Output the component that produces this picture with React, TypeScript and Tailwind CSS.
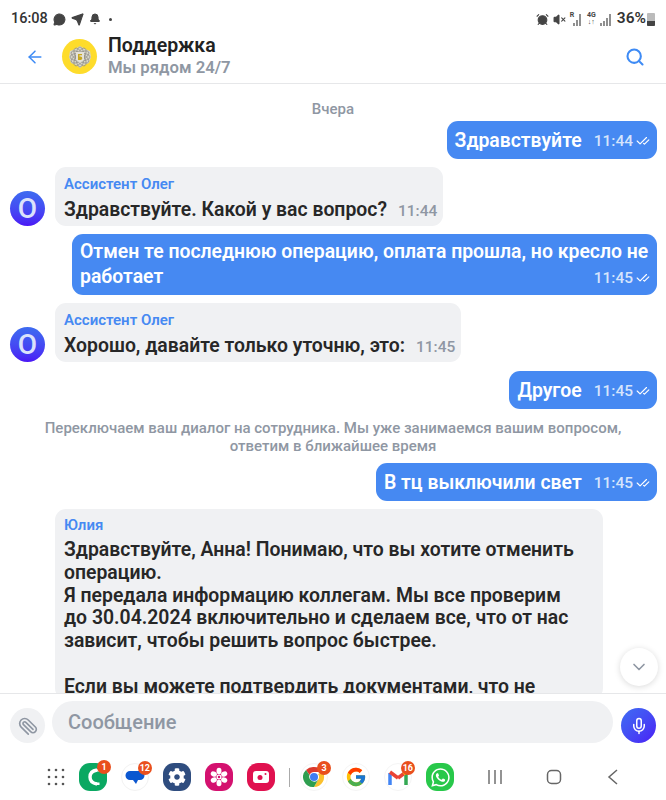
import React from 'react';
import { ArrowLeft, Search, ChevronDown, Paperclip, Mic, Bell, Send, MessageCircle, AlarmClock, VolumeX, CheckCheck } from 'lucide-react';
import { FaCog, FaWhatsapp } from 'react-icons/fa';
import { FcGoogle } from 'react-icons/fc';

const Bars = ({ className }: { className?: string }) => (
  <svg width="11" height="13" viewBox="0 0 11 13" className={`text-[#555] ${className ?? ''}`}>
    <path d="M1 13v-3M4 13V8M7 13V5M10 13V1" stroke="currentColor" strokeWidth="1.300" fill="none" />
  </svg>
);

const StatusBar = () => (
  <div className="flex h-[30px] shrink-0 items-center justify-between pl-[11px] pr-[11px] pt-[8px] text-[#333]">
    <div className="flex items-center gap-[5px]">
      <span className="text-[14.500px] font-medium">16:08</span>
      <MessageCircle size={13} fill="#444" stroke="#444" />
      <Send size={13} fill="#444" stroke="#444" />
      <Bell size={12} fill="#444" stroke="#444" />
      <span className="ml-[3px] h-[3px] w-[3px] rounded-full bg-[#444]" />
    </div>
    <div className="flex items-center">
      <AlarmClock size={13} fill="#444" stroke="#444" />
      <VolumeX size={13} fill="#444" stroke="#444" className="ml-[4px]" />
      <span className="relative ml-[4px] flex h-[14px] w-[11px] items-end justify-end">
        <span className="absolute left-0 top-[-1px] text-[7px] font-bold leading-[8px] text-[#444]">R</span>
        <svg width="8" height="12" viewBox="0 0 8 12" className="text-[#555]"><path d="M1 12V9M4 12V6M7 12V0" stroke="currentColor" strokeWidth="1.300" fill="none" /></svg>
      </span>
      <span className="ml-[6px] flex h-[14px] w-[9px] flex-col items-center text-[7px] font-bold leading-[7px] text-[#444]">
        <span>4G</span>
        <span>↓↑</span>
      </span>
      <Bars className="ml-[4px]" />
      <span className="ml-[6px] text-[15.500px] font-semibold leading-none">36%</span>
      <span className="relative ml-[1px] h-[13px] w-[8px] rounded-[1px] bg-[#bbb]">
        <span className="absolute bottom-0 left-0 right-0 h-[5px] rounded-b-[1px] bg-[#444]" />
      </span>
    </div>
  </div>
);

const Logo = () => (
  <div className="flex h-[35px] w-[35px] shrink-0 items-center justify-center rounded-full bg-[#fedc2b]">
    <svg width="24" height="24" viewBox="0 0 24 24">
      <path d="M12 1l5 3 5 2 1 6-2 6-5 2-4 3-4-3-5-2-2-6 1-6 5-2z" fill="#d6d4c8" />
      {[0, 30, 60, 90, 120, 150].map((a) => (
        <ellipse key={a} cx="12" cy="12" rx="10" ry="4" fill="none" stroke="#8f8e86" strokeWidth="0.700" transform={`rotate(${a} 12 12)`} />
      ))}
      <path d="M8 7h8v8l-4 3-4-3z" fill="#e4e2d8" />
      <path d="M10 9h4v1.200h-2.500v1.300h1a1.800 1.800 0 010 3.600H10z" fill="#c9a91c" />
    </svg>
  </div>
);

const Header = () => (
  <div className="flex h-[54px] shrink-0 items-center border-b border-[#e6e7e9] pl-[25px] pr-[21px]">
    <ArrowLeft size={20} strokeWidth={1.800} className="text-[#3e8bf5]" />
    <div className="ml-[17px]"><Logo /></div>
    <div className="ml-[11px] flex flex-1 flex-col">
      <span className="text-[19.500px] font-semibold leading-[22px] text-[#222]">Поддержка</span>
      <span className="text-[16.700px] font-semibold leading-[22px] text-[#8f97a3]">Мы рядом 24/7</span>
    </div>
    <Search size={20} strokeWidth={2.500} className="text-[#3e8bf5]" />
  </div>
);

const Mine = ({ text, time }: { text: string; time: string }) => (
  <div className="flex justify-end pr-[9px]">
    <div className="flex h-[38px] items-center rounded-[11px] bg-[#4689f2] pl-[8px] pr-[7px] text-white">
      <span className="mt-[1px] text-[19.400px] font-semibold">{text}</span>
      <span className="ml-[12px] mt-[4px] text-[15.500px] font-medium text-[#d5e4fc]">{time}</span>
      <CheckCheck size={14} className="ml-[3px] mt-[2px]" />
    </div>
  </div>
);

const MineWide = ({ first, second, time }: { first: string; second: string; time: string }) => (
  <div className="flex justify-end pr-[9px]">
    <div className="flex h-[61px] w-[585px] flex-col rounded-[11px] bg-[#4689f2] pl-[8px] pr-[7px] pt-[6px] text-white">
      <div className="whitespace-nowrap text-[19.400px] font-semibold leading-[24px]">{first}</div>
      <div className="flex items-center justify-between leading-[24px]">
        <span className="text-[19.400px] font-semibold">{second}</span>
        <span className="mt-[2px] flex items-center text-[15.500px] font-medium text-[#d5e4fc]">
          {time}
          <CheckCheck size={14} className="ml-[3px] text-white" />
        </span>
      </div>
    </div>
  </div>
);

const Assistant = ({ text, time }: { text: string; time: string }) => (
  <div className="flex items-end pl-[10px]">
    <div className="flex h-[35px] w-[35px] items-center justify-center rounded-full bg-gradient-to-b from-[#3d6bf0] to-[#4a14f5] text-[28px] font-medium leading-none text-[#dbe2fb]">
      O
    </div>
    <div className="ml-[10px] flex h-[59px] flex-col rounded-[11px] bg-[#f0f1f3] pl-[9px] pr-[6px] pt-[8px]">
      <span className="text-[15px] font-semibold leading-[18px] text-[#4689f2]">Ассистент Олег</span>
      <div className="mt-[3px] flex items-center leading-[26px]">
        <span className="text-[19.400px] font-semibold text-[#272727]">{text}</span>
        <span className="ml-[11px] mt-[2px] text-[15.500px] font-medium text-[#8f97a3]">{time}</span>
      </div>
    </div>
  </div>
);

const Chat = () => (
  <div className="relative min-h-0 flex-1 overflow-hidden">
    <div className="flex flex-col gap-[8px]">
      <div className="-mb-[3px] pt-[18px] text-center text-[15px] font-medium leading-[14px] text-[#8f97a3]">Вчера</div>
      <Mine text="Здравствуйте" time="11:44" />
      <Assistant text="Здравствуйте. Какой у вас вопрос?" time="11:44" />
      <MineWide first="Отмен те последнюю операцию, оплата прошла, но кресло не" second="работает" time="11:45" />
      <Assistant text="Хорошо, давайте только уточню, это:" time="11:45" />
      <div className="mt-[1px]">
        <Mine text="Другое" time="11:45" />
      </div>
      <div className="px-[40px] pt-[2px] text-center text-[15px] font-medium leading-[18px] text-[#8f97a3]">
        Переключаем ваш диалог на сотрудника. Мы уже занимаемся вашим вопросом, ответим в ближайшее время
      </div>
      <Mine text="В тц выключили свет" time="11:45" />
      <div className="ml-[55px] w-[548px] rounded-[11px] bg-[#f0f1f3] pl-[9px] pr-[20px] pt-[7px]">
        <div className="text-[15px] font-semibold leading-[18px] text-[#4689f2]">Юлия</div>
        <div className="mt-[5px] whitespace-pre-line text-[19.400px] font-semibold leading-[22.800px] text-[#272727]">
          {'Здравствуйте, Анна! Понимаю, что вы хотите отменить операцию.\nЯ передала информацию коллегам. Мы все проверим до 30.04.2024 включительно и сделаем все, что от нас зависит, чтобы решить вопрос быстрее.\n\nЕсли вы можете подтвердить документами, что не'}
        </div>
      </div>
    </div>
    <div className="absolute bottom-[7px] right-[8px] flex h-[38px] w-[38px] items-center justify-center rounded-full bg-white shadow-[0_1px_6px_rgba(0,0,0,0.15)]">
      <ChevronDown size={20} className="text-[#8f97a3]" />
    </div>
  </div>
);

const InputBar = () => (
  <div className="flex h-[57px] shrink-0 items-end border-t border-[#e6e7e9] pb-[7px] pl-[10px] pr-[10px]">
    <div className="flex h-[35px] w-[35px] items-center justify-center rounded-full bg-[#f0f1f3]">
      <Paperclip size={20} className="rotate-90 text-[#8f97a3]" />
    </div>
    <div className="ml-[7px] flex h-[42px] w-[561px] items-center rounded-full bg-[#f0f1f3] pl-[16px] text-[20px] font-medium text-[#8f97a3]">
      Сообщение
    </div>
    <div className="ml-[8px] flex h-[35px] w-[35px] items-center justify-center rounded-full bg-gradient-to-br from-[#3f6bf3] to-[#4a14f5]">
      <Mic size={18} className="text-white" />
    </div>
  </div>
);

const Badge = ({ n }: { n: string }) => (
  <span className="absolute right-[-4px] top-[-3px] flex h-[14px] min-w-[14px] items-center justify-center rounded-full bg-[#e94f1d] px-[2px] text-[9px] font-bold leading-none text-white">
    {n}
  </span>
);

const DockIcon = ({ badge, className, children }: { badge?: string; className?: string; children?: React.ReactNode }) => (
  <div className={`relative flex h-[28px] w-[28px] shrink-0 items-center justify-center rounded-[11px] ${className ?? ''}`}>
    {children}
    {badge && <Badge n={badge} />}
  </div>
);

const Dock = () => (
  <div className="flex h-[50px] shrink-0 items-center pl-[47px] pt-[4px]">
    <svg width="18" height="18" viewBox="0 0 18 18" fill="#555" className="mr-[14px]">
      {[2, 9, 16].map((y) => [2, 9, 16].map((x) => <circle key={`${x}-${y}`} cx={x} cy={y} r="1.300" />))}
    </svg>
    <div className="flex items-center gap-[14px]">
      <DockIcon badge="1" className="bg-[#0aa862]">
        <svg width="20" height="22" viewBox="0 0 20 22" fill="none" stroke="#fff" strokeWidth="3.400"><path d="M14 4C8 5 7 8 7 11s1 6 7 7" /><path d="M14 3v2.500M14 16.500V19" strokeWidth="5" /></svg>
      </DockIcon>
      <DockIcon badge="12" className="rounded-full border border-[#f2f2f2]">
        <svg width="22" height="20" viewBox="0 0 22 20"><path d="M6 4h10a4.500 4.500 0 010 9h-2l-2 4-3-4H6a4.500 4.500 0 010-9z" fill="#0b57d0" /></svg>
      </DockIcon>
      <DockIcon className="bg-[#2f4d7f]">
        <FaCog size={18} color="#fff" />
      </DockIcon>
      <DockIcon className="bg-[#d4116f]">
        <svg width="20" height="20" viewBox="0 0 20 20" fill="#fff">
          {[0, 60, 120, 180, 240, 300].map((a) => <ellipse key={a} cx="10" cy="4" rx="2.500" ry="3.200" transform={`rotate(${a} 10 10)`} />)}
          <circle cx="10" cy="10" r="2.500" />
          <circle cx="10" cy="10" r="1.200" fill="#d4116f" />
        </svg>
      </DockIcon>
      <DockIcon className="bg-[#e0114f]">
        <svg width="20" height="18" viewBox="0 0 20 18"><rect x="2" y="3" width="16" height="12" rx="3" fill="#fff" /><circle cx="9" cy="9.500" r="2.500" fill="#e0114f" /><circle cx="14.500" cy="6" r="1" fill="#e0114f" /></svg>
      </DockIcon>
      <div className="h-[19px] w-px bg-[#aaa]" />
      <DockIcon badge="3" className="-ml-[4px] rounded-full border border-[#f5f5f5]">
        <svg width="22" height="22" viewBox="0 0 22 22">
          <path d="M11 1a10 10 0 018.700 5H11a5 5 0 00-4.500 3L3 4a10 10 0 018-3z" fill="#db3a2e" />
          <path d="M19.700 6A10 10 0 0111 21l4.300-7.500A5 5 0 0015 8z" fill="#fbc02d" />
          <path d="M3 4a10 10 0 008 17l4.300-7.500a5 5 0 01-8.800-4.500z" fill="#2e9e4f" />
          <circle cx="11" cy="11" r="4" fill="#3e7cf2" />
        </svg>
      </DockIcon>
      <DockIcon className="rounded-full border border-[#f5f5f5]">
        <FcGoogle size={22} />
      </DockIcon>
      <DockIcon badge="16" className="rounded-full border border-[#f5f5f5]">
        <svg width="20" height="16" viewBox="0 0 20 16" fill="none" strokeWidth="3.500">
          <path d="M2 16V4" stroke="#4285f4" />
          <path d="M18 16V4" stroke="#34a853" />
          <path d="M2 3l8 6" stroke="#ea4335" />
          <path d="M10 9l8-6" stroke="#ea4335" />
          <path d="M15.500 5L18 3" stroke="#fbbc05" />
        </svg>
      </DockIcon>
      <DockIcon className="bg-[#28c84a]">
        <FaWhatsapp size={21} color="#fff" />
      </DockIcon>
    </div>
    <div className="ml-[33px] flex items-center text-[#666]">
      <svg width="16" height="16" viewBox="0 0 16 16" stroke="currentColor" strokeWidth="1.400"><path d="M2 1v14M8 1v14M14 1v14" /></svg>
      <svg width="16" height="16" viewBox="0 0 16 16" fill="none" stroke="currentColor" strokeWidth="1.500" className="ml-[43px]"><rect x="1.500" y="1.500" width="13" height="13" rx="4" /></svg>
      <svg width="12" height="16" viewBox="0 0 12 16" fill="none" stroke="currentColor" strokeWidth="1.500" className="ml-[45px]"><path d="M10 1L2 8l8 7" /></svg>
    </div>
  </div>
);

export default function App() {
  return (
    <div className="flex h-[800px] w-[666px] flex-col overflow-hidden bg-white font-['Roboto',sans-serif]">
      <StatusBar />
      <Header />
      <Chat />
      <InputBar />
      <Dock />
    </div>
  );
}
